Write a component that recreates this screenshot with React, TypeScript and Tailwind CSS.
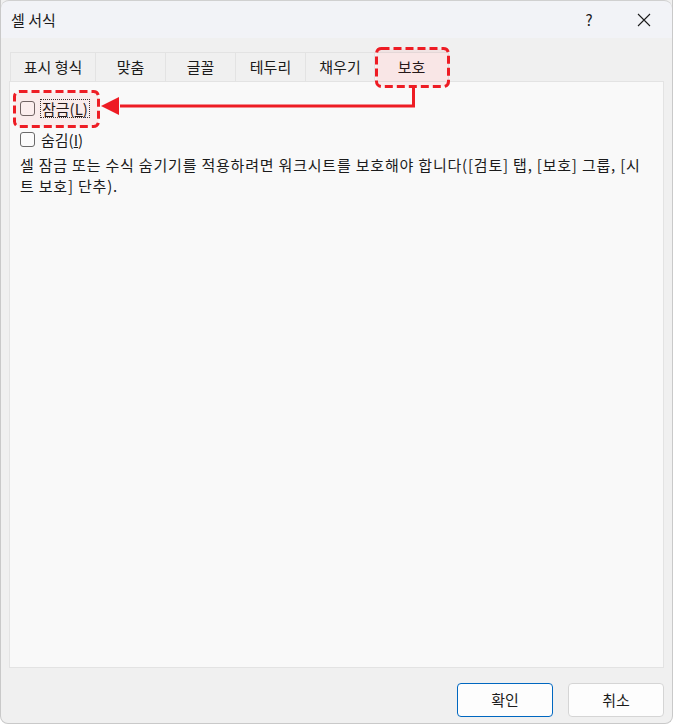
import React from "react";

const font = { fontFamily: '"Noto Sans CJK KR", "Noto Sans", sans-serif' };

const tabs = [
  { label: "표시 형식", w: "w-[85px]" },
  { label: "맞춤", w: "w-[70px]" },
  { label: "글꼴", w: "w-[70px]" },
  { label: "테두리", w: "w-[70px]" },
  { label: "채우기", w: "w-[69px]" },
];

const Checkbox = () => (
  <span className="inline-block w-[15px] h-[15px] rounded-[3px] border border-[#6a6a6a] bg-[#fbfbfb]" />
);

// 빨간 점선 강조 박스
const DashBox = ({ w, h, className }: { w: number; h: number; className: string }) => (
  <svg className={`absolute pointer-events-none z-10 ${className}`} width={w} height={h} viewBox={`0 0 ${w} ${h}`}>
    <rect
      x="1.5"
      y="1.5"
      width={w - 3}
      height={h - 3}
      rx="5"
      fill="rgba(255,0,0,0.05)"
      stroke="#ee1c24"
      strokeWidth="3"
      strokeDasharray="8 4"
    />
  </svg>
);

const App = () => {
  return (
    <div
      className="w-[673px] h-[724px] bg-[#f0f0f0] text-[#1b1b1b] flex flex-col overflow-hidden rounded-b-[8px] border-x border-b border-[#c9c9c9]"
      style={font}
    >
      {/* 제목 표시줄 */}
      <div className="h-[38px] shrink-0 bg-[#f2f3f7] flex items-center pl-[10px] border-t border-[#d0d0d0] rounded-t-[8px]">
        <span className="text-[15px] leading-none">셀 서식</span>
        <span className="ml-auto text-[15px] leading-none w-[20px] text-center">?</span>
        <svg className="ml-[38px] mr-[21px]" width="14" height="14" viewBox="0 0 14 14">
          <path d="M1 1 L13 13 M13 1 L1 13" stroke="#1b1b1b" strokeWidth="1.1" />
        </svg>
      </div>

      {/* 탭 */}
      <div className="flex pl-[9px] pt-[14px] shrink-0">
        {tabs.map((t) => (
          <div
            key={t.label}
            className={`${t.w} h-[29px] flex items-center justify-center text-[15px] bg-[#f0f0f0] border-t border-l border-[#e3e3e3]`}
          >
            {t.label}
          </div>
        ))}
        <div className="relative w-[75px] h-[29px] flex items-center justify-center text-[15px] bg-[#f9f3f3] border-t border-x border-[#e3e3e3]">
          보호
          <DashBox w={75} h={41} className="left-[0px] top-[-6px]" />
        </div>
      </div>

      {/* 내용 패널 */}
      <div className="relative mx-[8px] h-[587px] bg-[#f9f9f9] border border-[#e3e3e3] px-[10px] pt-[17px]">
        <div className="flex items-center gap-[6px] h-[18px] relative">
          <Checkbox />
          <span className="text-[15px] leading-[17px] px-[1px] outline-1 outline-dotted outline-[#333]">
            잠금(<span className="underline">L</span>)
          </span>
          <DashBox w={87} h={38} className="left-[-7px] top-[-9px]" />
        </div>
        <div className="flex items-center gap-[6px] h-[18px] mt-[13px]">
          <Checkbox />
          <span className="text-[15px] leading-[17px]">
            숨김(<span className="underline">I</span>)
          </span>
        </div>
        <p className="mt-[6px] text-[15px] leading-[21px] tracking-[0.8px] break-all pr-[6px]">
          셀 잠금 또는 수식 숨기기를 적용하려면 워크시트를 보호해야 합니다([검토] 탭, [보호] 그룹, [시트 보호] 단추).
        </p>

        {/* 화살표 */}
        <svg className="absolute left-[82px] top-[4px] z-10" width="330" height="40" viewBox="0 0 330 40">
          <path d="M321.5 0 V20 H28" stroke="#ee1c24" strokeWidth="3" fill="none" />
          <path d="M9 20 L27 11 L27 29 Z" fill="#ee1c24" />
        </svg>
      </div>

      {/* 버튼 */}
      <div className="flex justify-end gap-[15px] pr-[8px] pt-[15px]">
        <button className="w-[96px] h-[34px] rounded-[4px] border border-[#0067c0] bg-[#fdfdfd] text-[15px]">
          확인
        </button>
        <button className="w-[96px] h-[34px] rounded-[4px] border border-[#d5d5d5] bg-[#fdfdfd] text-[15px]">
          취소
        </button>
      </div>
    </div>
  );
};

export default App;
